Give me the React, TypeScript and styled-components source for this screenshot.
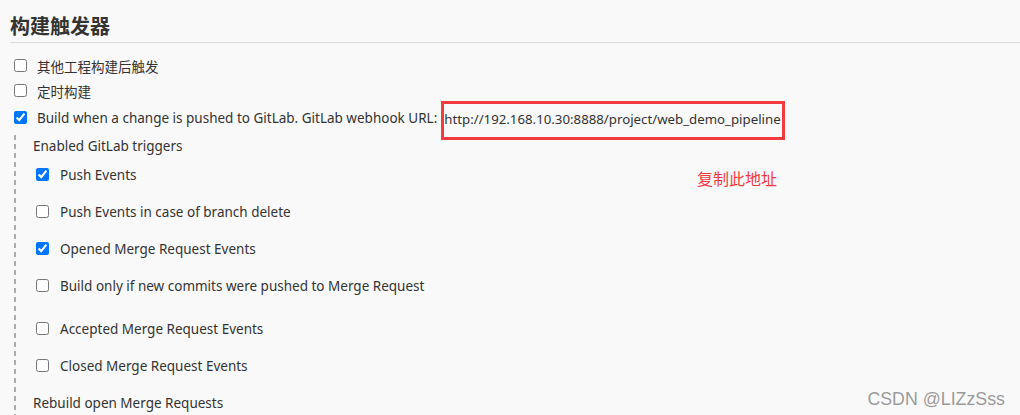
import React from "react";
import styled, { createGlobalStyle } from "styled-components";

const GlobalStyle = createGlobalStyle`
  html, body {
    margin: 0;
    padding: 0;
    background: #f9f9f9;
  }
`;

const Page = styled.div`
  position: relative;
  height: 415px;
  overflow: hidden;
  padding-left: 10px;
  font-family: "Noto Sans", "Noto Sans CJK SC", sans-serif;
  font-size: 13.5px;
  color: #333;
`;

const Title = styled.h2`
  margin: 0;
  padding: 13px 0 1px;
  line-height: 28px;
  font-size: 20px;
  font-weight: 700;
  color: #333;
  border-bottom: 1px solid #dcdcdc;
`;

const Row = styled.div<{ $top: number; $indent: number; $gap: number }>`
  display: flex;
  align-items: center;
  height: 24px;
  margin-top: ${(p) => p.$top}px;
  padding-left: ${(p) => p.$indent}px;
  gap: ${(p) => p.$gap}px;
  white-space: nowrap;
`;

const Text = styled.span`
  padding-top: 1px;
`;

const Line = styled.span`
  display: flex;
  align-items: center;
  height: 24px;
  gap: 4px;
`;

const Box = styled.input.attrs({ type: "checkbox" })`
  width: 13px;
  height: 13px;
  margin: 0;
  flex: none;
  accent-color: #0075ff;
`;

const UrlBox = styled.span`
  align-self: flex-start;
  margin-top: -4px;
  padding: 3px 1px 6px 0;
  line-height: 24px;
  font-size: 13.25px;
  border: 3px solid #f23a3f;
`;

const Triggers = styled.div`
  margin: 4px 0 0 4px;
  padding-left: 19px;
  background-image: repeating-linear-gradient(
    to bottom,
    #acacac 0 5px,
    transparent 5px 9px
  );
  background-size: 2px 100%;
  background-repeat: no-repeat;
  background-position: 0 2px;
  padding-bottom: 20px;
`;

const Label = styled.div<{ $top: number }>`
  height: 24px;
  line-height: 26px;
  margin-top: ${(p) => p.$top}px;
`;

const Note = styled.div`
  position: absolute;
  left: 697px;
  top: 166px;
  font-family: "Noto Sans CJK SC", sans-serif;
  font-size: 16px;
  color: #f0393c;
`;

const Watermark = styled.div`
  position: absolute;
  right: 15px;
  top: 389px;
  font-family: "Liberation Sans", Arial, sans-serif;
  font-size: 17.8px;
  color: #9a9a9a;
  text-shadow: 0 0 1px #fff;
`;

type Trigger = { text: string; checked: boolean; top: number };

const triggers: Trigger[] = [
  { text: "Push Events", checked: true, top: 5 },
  { text: "Push Events in case of branch delete", checked: false, top: 13 },
  { text: "Opened Merge Request Events", checked: true, top: 13 },
  { text: "Build only if new commits were pushed to Merge Request", checked: false, top: 13 },
  { text: "Accepted Merge Request Events", checked: false, top: 19 },
  { text: "Closed Merge Request Events", checked: false, top: 13 },
];

export default function App() {
  return (
    <Page>
      <GlobalStyle />
      <Title>构建触发器</Title>
      <Row $top={10} $indent={4} $gap={10}>
        <Box readOnly />
        <Text>其他工程构建后触发</Text>
      </Row>
      <Row $top={1} $indent={4} $gap={10}>
        <Box readOnly />
        <Text>定时构建</Text>
      </Row>
      <Row $top={3} $indent={4} $gap={10}>
        <Box defaultChecked />
        <Line>
          <Text>Build when a change is pushed to GitLab. GitLab webhook URL:</Text>
          <UrlBox>http://192.168.10.30:8888/project/web_demo_pipeline</UrlBox>
        </Line>
      </Row>
      <Triggers>
        <Label $top={0}>Enabled GitLab triggers</Label>
        {triggers.map((t) => (
          <Row key={t.text} $top={t.top} $indent={3} $gap={11}>
            <Box defaultChecked={t.checked} />
            <Text>{t.text}</Text>
          </Row>
        ))}
        <Label $top={13}>Rebuild open Merge Requests</Label>
      </Triggers>
      <Note>复制此地址</Note>
      <Watermark>CSDN @LIZzSss</Watermark>
    </Page>
  );
}
